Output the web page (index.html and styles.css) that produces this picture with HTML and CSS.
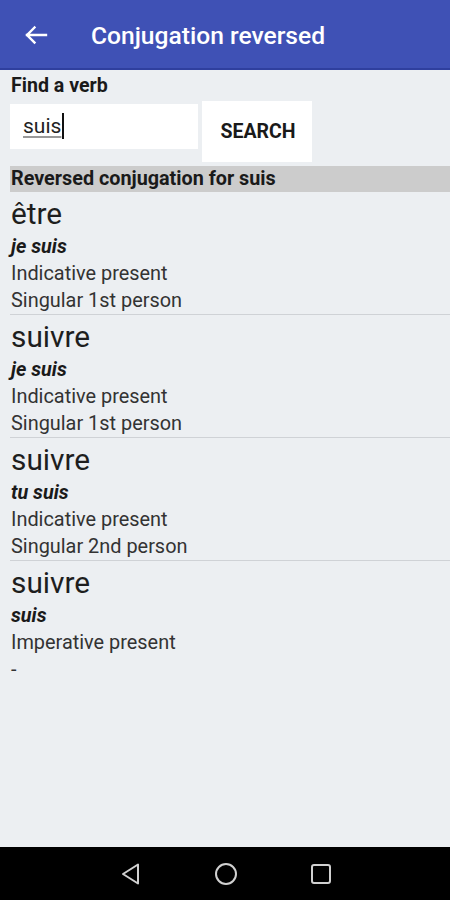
FILE: index.html
```html
<!DOCTYPE html>
<html>
<head>
<meta charset="utf-8">
<link rel="stylesheet" href="styles.css">
</head>
<body>
<div class="screen">
  <header class="appbar">
    <svg class="back" width="24" height="20" viewBox="0 0 24 20">
      <path d="M3 10H22M3 10L10.5 2.5M3 10L10.5 17.5" fill="none" stroke="#fff" stroke-width="2.4" stroke-linecap="square"/>
    </svg>
    <div class="title">Conjugation reversed</div>
  </header>
  <main class="content">
    <div class="label">Find a verb</div>
    <div class="searchrow">
      <div class="input"><span class="typed">suis</span><span class="cursor"></span></div>
      <div class="button">SEARCH</div>
    </div>
    <div class="bar">Reversed conjugation for suis</div>
    <div class="entry">
      <div class="verb">être</div>
      <div class="form">je suis</div>
      <div class="line">Indicative present</div>
      <div class="line">Singular 1st person</div>
    </div>
    <div class="entry">
      <div class="verb">suivre</div>
      <div class="form">je suis</div>
      <div class="line">Indicative present</div>
      <div class="line">Singular 1st person</div>
    </div>
    <div class="entry">
      <div class="verb">suivre</div>
      <div class="form">tu suis</div>
      <div class="line">Indicative present</div>
      <div class="line">Singular 2nd person</div>
    </div>
    <div class="entry last">
      <div class="verb">suivre</div>
      <div class="form">suis</div>
      <div class="line">Imperative present</div>
      <div class="line">-</div>
    </div>
  </main>
  <nav class="navbar">
    <svg width="22" height="24" viewBox="0 0 22 24"><path d="M18 2.5V21.5L3 12Z" fill="none" stroke="#d0d0d0" stroke-width="2" stroke-linejoin="round"/></svg>
    <svg width="24" height="24" viewBox="0 0 24 24"><circle cx="12" cy="12" r="10" fill="none" stroke="#d0d0d0" stroke-width="2"/></svg>
    <svg width="22" height="22" viewBox="0 0 22 22"><rect x="2" y="2" width="18" height="18" rx="2" fill="none" stroke="#d0d0d0" stroke-width="2"/></svg>
  </nav>
</div>
</body>
</html>
```

FILE: styles.css
```css
* { box-sizing: border-box; }
html, body { margin: 0; padding: 0; }
body {
  width: 450px;
  height: 900px;
  font-family: Roboto, "Liberation Sans", sans-serif;
  background: #eceff2;
  overflow: hidden;
}
.screen {
  display: flex;
  flex-direction: column;
  height: 900px;
}
.appbar {
  height: 70px;
  background: #3f51b5;
  border-bottom: 2px solid #2f3f9e;
  display: flex;
  align-items: center;
  padding-left: 24px;
  flex-shrink: 0;
}
.back { margin-right: 43px; margin-top: 2px; }
.title {
  color: #fff;
  font-size: 24.6px;
  font-weight: 500;
  margin-top: 2px;
}
.content {
  flex: 1;
  padding-left: 10px;
}
.label {
  font-size: 19.6px;
  font-weight: 700;
  color: #1a1a1a;
  height: 31px;
  line-height: 32px;
  padding-left: 1px;
}
.searchrow {
  display: flex;
  align-items: flex-start;
  gap: 4px;
}
.input {
  width: 188px;
  height: 45px;
  margin-top: 3px;
  background: #fff;
  display: flex;
  align-items: center;
  padding-left: 13px;
  padding-bottom: 2px;
}
.typed {
  font-size: 21px;
  color: #222;
  text-decoration: underline;
  text-decoration-color: #999;
  text-underline-offset: 3px;
}
.cursor {
  width: 2px;
  height: 26px;
  background: #111;
  margin-left: 1px;
}
.button {
  width: 110px;
  height: 61px;
  background: #fff;
  display: flex;
  align-items: center;
  justify-content: center;
  font-size: 19.5px;
  font-weight: 700;
  color: #1a1a1a;
  padding-left: 2px;
}
.bar {
  margin-top: 4px;
  height: 26px;
  line-height: 26px;
  background: #cccccc;
  font-size: 19.8px;
  font-weight: 700;
  color: #1a1a1a;
  padding-left: 1px;
}
.entry {
  padding: 3px 0 0 1px;
  border-bottom: 1px solid #cfd2d6;
}
.entry.last { border-bottom: none; }
.verb {
  font-size: 29.8px;
  line-height: 38px;
  color: #1e1e1e;
}
.form {
  font-size: 19.8px;
  line-height: 27px;
  font-weight: 700;
  font-style: italic;
  color: #1a1a1a;
}
.line {
  font-size: 19.9px;
  line-height: 27px;
  color: #333;
}
.navbar {
  height: 53px;
  background: #000;
  flex-shrink: 0;
  display: flex;
  align-items: center;
  justify-content: center;
  gap: 72px;
  padding-left: 2px;
}
```
